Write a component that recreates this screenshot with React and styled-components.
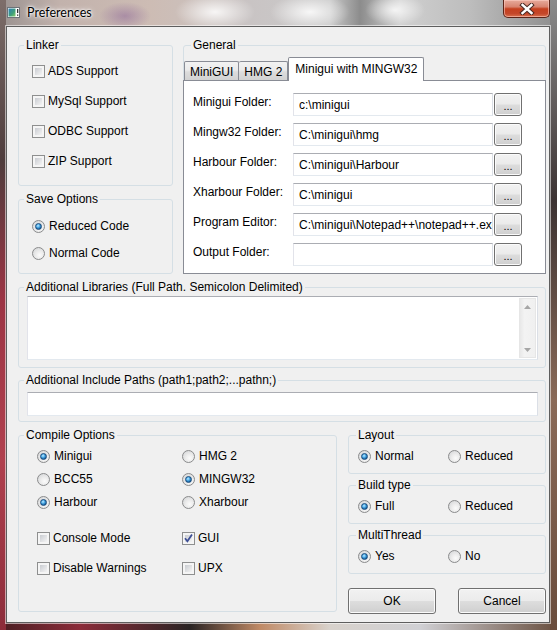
import React from 'react';
import styled, { createGlobalStyle } from 'styled-components';

const Global = createGlobalStyle`
  html, body { margin: 0; padding: 0; }
  body {
    width: 557px; height: 630px; overflow: hidden;
    font-family: "Liberation Sans", Arial, sans-serif; font-size: 12px; color: #000;
  }
`;

const Frame = styled.div`
  width: 557px; height: 630px; box-sizing: border-box;
  padding: 0 7px 7px 6px;
  display: flex; flex-direction: column;
  background:
    linear-gradient(180deg, #7d6e6a 0px, #4e3c3c 160px, #9c3444 300px, #b0404e 460px, #8c2c3a 630px) left top / 6px 100% no-repeat,
    linear-gradient(180deg, #8a8a8a 0px, #3c3232 200px, #8a6a58 400px, #6a4c3c 630px) right top / 7px 100% no-repeat,
    linear-gradient(90deg, #4a1e22 0px, #8c2c3a 80px, #2a2424 190px, #c08a66 260px, #d8d2cc 330px, #d0d0d4 420px, #6a5040 557px) left bottom / 100% 8px no-repeat,
    radial-gradient(ellipse 40px 18px at 215px 12px, rgba(255,255,255,0.85), transparent),
    radial-gradient(ellipse 40px 18px at 310px 12px, rgba(255,255,255,0.85), transparent),
    radial-gradient(ellipse 30px 16px at 395px 10px, rgba(255,255,255,0.8), transparent),
    radial-gradient(ellipse 26px 14px at 125px 16px, rgba(110,60,140,0.35), transparent),
    linear-gradient(90deg, #9a9290 0px, #c2b2ac 60px, #cdbcb4 150px, #c9c4c4 250px, #cacaca 330px, #8c8c8c 360px, #d0d0d0 400px, #bdbdbd 470px, #8e8e8e 557px);
`;

const TitleBar = styled.div`
  height: 26px; flex: none;
  display: flex; align-items: flex-start;
`;

const AppIcon = styled.svg`
  margin: 7px 0 0 1px; flex: none;
`;

const Title = styled.span`
  margin: 5px 0 0 7px;
  font-family: Lato, "Noto Sans", sans-serif; font-size: 12.5px; line-height: 15px;
  text-shadow: 0 0 6px #fff, 0 0 3px #fff, 0 0 2px #fff;
`;

const CloseButton = styled.div`
  margin-left: auto; flex: none;
  width: 47px; height: 18px; box-sizing: border-box;
  border: 1px solid #5c2418; border-top: none; border-radius: 0 0 5px 5px;
  background: linear-gradient(180deg, #e7ab9c 0%, #d88470 40%, #c5401f 52%, #c4472a 80%, #d9714e 100%);
  box-shadow: inset 0 0 0 1px rgba(255,210,200,0.55);
  display: flex; align-items: center; justify-content: center;
`;

const Client = styled.div`
  flex: 1; box-sizing: border-box;
  border: 1px solid #5e5e5e;
  box-shadow: 0 0 0 1px rgba(255,255,255,0.55);
  background: #f0f0f0;
  padding: 11px 2px 0 11px;
  display: flex; flex-direction: column;
`;

const Row = styled.div`
  display: flex; gap: ${p => p.$gap || 0}px;
  margin-top: ${p => p.$mt || 0}px;
  justify-content: ${p => p.$justify || 'flex-start'};
  height: ${p => (p.$h ? `${p.$h}px` : 'auto')};
`;

const Column = styled.div`
  display: flex; flex-direction: column;
  width: ${p => p.$w}px; gap: ${p => p.$gap || 0}px;
`;

const Group = styled.fieldset`
  box-sizing: border-box; margin: 0; padding: 0; min-width: 0;
  width: ${p => p.$w}px; height: ${p => p.$h}px; flex: none;
  border: 1px solid #d5dfe5; border-radius: 3px;
  display: flex; flex-direction: column;
`;

const Legend = styled.legend`
  margin-left: ${p => p.$offset ?? 5}px;
  padding: 0 2px;
  font-size: 12px; line-height: 14px;
`;

const OptionList = styled.div`
  display: flex; flex-direction: column;
  padding: ${p => p.$pad};
  gap: ${p => p.$gap}px;
`;

const OptionGrid = styled.div`
  display: grid;
  grid-template-columns: ${p => p.$col}px 1fr;
  grid-auto-rows: 16px;
  row-gap: ${p => p.$gap}px;
  padding: ${p => p.$pad};
`;

const Option = styled.label`
  display: flex; align-items: center; gap: ${p => p.$gap ?? 3}px;
  height: 16px; white-space: nowrap;
`;

const Box = styled.span`
  width: 13px; height: 13px; box-sizing: border-box; flex: none;
  border: 1px solid #8e8f8f;
  padding: 2px;
  background: linear-gradient(135deg, #c9ccd1 0%, #e3e4e6 60%, #f4f4f4 100%) content-box, #f5f5f5 padding-box;
  display: flex; align-items: center; justify-content: center;
`;

const Circle = styled.span`
  width: 13px; height: 13px; box-sizing: border-box; flex: none;
  border-radius: 50%;
  border: 1px solid #8a8b8c;
  background: radial-gradient(circle at 60% 65%, #fbfbfb 0%, #ececec 40%, #cfd1d3 100%);
  display: flex; align-items: center; justify-content: center;
`;

const Dot = styled.span`
  width: 7px; height: 7px; border-radius: 50%; box-sizing: border-box;
  border: 1px solid #1a4b7c;
  background: radial-gradient(circle at 40% 35%, #c6ecff 0%, #53b0ea 35%, #15609f 75%, #0b3f70 100%);
`;

const Checkbox = ({ checked, children }) => (
  <Option>
    <Box>
      {checked && (
        <svg width="11" height="11" viewBox="0 0 11 11" style={{ margin: -2 }}>
          <path d="M2 5.2 L4.4 8.2 L9 1.6" fill="none" stroke="#3d4f95" strokeWidth="1.8" />
        </svg>
      )}
    </Box>
    {children}
  </Option>
);

const Radio = ({ checked, children }) => (
  <Option $gap={4}>
    <Circle>{checked && <Dot />}</Circle>
    {children}
  </Option>
);

/* Tabs */
const TabStrip = styled.div`
  display: flex; align-items: flex-end;
  height: 23px; margin: 5px -1px 0 -1px; padding-left: 1px; flex: none;
`;

const Tab = styled.div`
  box-sizing: border-box;
  height: ${p => (p.$active ? 24 : 19)}px;
  margin-bottom: ${p => (p.$active ? -1 : 0)}px;
  padding: ${p => (p.$active ? '4px 6px 0 6px' : '3px 5px 0 5px')};
  border: 1px solid #898c95; border-bottom: none;
  border-left: ${p => (p.$first || p.$active ? '1px solid #898c95' : 'none')};
  border-radius: 2px 2px 0 0;
  background: ${p => (p.$active ? '#fff' : 'linear-gradient(180deg, #f2f2f2 0%, #ebebeb 45%, #dcdcdc 55%, #d2d2d2 100%)')};
  position: relative; z-index: ${p => (p.$active ? 1 : 0)};
  white-space: nowrap; line-height: 14px;
`;

const TabPanel = styled.div`
  flex: 1; background: #fff;
  border: 1px solid #898c95;
  margin: 0 -1px -1px -1px;
  padding: 12px 0 0 9px;
  display: flex; flex-direction: column; gap: 7px;
`;

const FormRow = styled.div`
  display: flex; align-items: flex-start; height: 23px;
`;

const FormLabel = styled.span`
  width: 100px; flex: none; padding-top: 2px; line-height: 14px;
`;

const TextInput = styled.input`
  box-sizing: border-box;
  width: ${p => p.$w}px; height: ${p => p.$h || 23}px; flex: none;
  margin: 0; padding: 0 0 0 5px;
  font: 12px "Liberation Sans", Arial, sans-serif; color: #000;
  border: 1px solid; border-color: #abadb3 #dbdfe6 #e3e9ef #e2e3ea;
  background: #fff; outline: none;
`;

const Button = styled.button`
  box-sizing: border-box; margin: 0; flex: none;
  width: ${p => p.$w}px; height: ${p => p.$h}px;
  margin-left: ${p => p.$ml || 0}px;
  border: 1px solid #707070; border-radius: 3px;
  background: linear-gradient(180deg, #f2f2f2 0%, #ebebeb 48%, #dddddd 52%, #cfcfcf 100%);
  box-shadow: inset 0 0 0 1px #fbfbfb;
  font: ${p => p.$fs || 12}px "Liberation Sans", Arial, sans-serif; color: #000;
  padding: ${p => p.$pad || '0'};
  display: flex; justify-content: center; align-items: ${p => p.$align || 'center'};
`;

const MemoBox = styled.div`
  box-sizing: border-box; height: 64px;
  border: 1px solid; border-color: #abadb3 #dbdfe6 #e3e9ef #e2e3ea;
  background: #fff; display: flex;
`;

const Memo = styled.textarea`
  flex: 1; border: none; outline: none; resize: none; margin: 0; padding: 2px 4px;
  font: 12px "Liberation Sans", Arial, sans-serif; background: transparent;
`;

const ScrollBar = styled.div`
  width: 17px; flex: none; box-sizing: border-box;
  margin: 1px 1px 1px 0;
  background: linear-gradient(90deg, #e8e8e8 0%, #f3f3f3 30%, #f0f0f0 100%);
  border: 1px solid #e6e6e6;
  display: flex; flex-direction: column; justify-content: space-between; align-items: center;
  padding: 6px 0 5px 0;
`;

const GroupBody = styled.div`
  padding: ${p => p.$pad};
  display: flex; flex-direction: column;
`;

const Dots = styled.span`
  line-height: 8px;
`;

const fields = [
  ['Minigui Folder:', 'c:\\minigui'],
  ['Mingw32 Folder:', 'C:\\minigui\\hmg'],
  ['Harbour Folder:', 'C:\\minigui\\Harbour'],
  ['Xharbour Folder:', 'C:\\minigui'],
  ['Program Editor:', 'C:\\minigui\\Notepad++\\notepad++.exe'],
  ['Output Folder:', ''],
];

export default function App() {
  return (
    <>
      <Global />
      <Frame>
        <TitleBar>
          <AppIcon width="13" height="11" viewBox="0 0 13 11">
            <rect x="0.5" y="0.5" width="12" height="10" fill="#fff" stroke="#6d7378" />
            <defs>
              <linearGradient id="ig" x1="0" y1="0" x2="1" y2="1">
                <stop offset="0" stopColor="#2f7fb8" />
                <stop offset="0.6" stopColor="#3fa07a" />
                <stop offset="1" stopColor="#8ccf6a" />
              </linearGradient>
            </defs>
            <rect x="1.5" y="1.5" width="7" height="8" fill="url(#ig)" />
            <rect x="10" y="2" width="1.3" height="4" fill="#333" />
            <rect x="10" y="7.5" width="1.3" height="1.3" fill="#333" />
          </AppIcon>
          <Title>Preferences</Title>
          <CloseButton>
            <svg width="16" height="12" viewBox="0 0 16 12">
              <path d="M3.5 2 L12.5 10 M12.5 2 L3.5 10" stroke="#4a2a24" strokeWidth="4.4" strokeLinecap="square" />
              <path d="M3.5 2 L12.5 10 M12.5 2 L3.5 10" stroke="#fff" strokeWidth="2.4" strokeLinecap="square" />
            </svg>
          </CloseButton>
        </TitleBar>

        <Client>
          <Row $gap={10} $h={236}>
            <Column $w={155} $gap={6}>
              <Group $w={155} $h={148}>
                <Legend>Linker</Legend>
                <OptionList $pad="11px 0 0 13px" $gap={14}>
                  <Checkbox>ADS Support</Checkbox>
                  <Checkbox>MySql Support</Checkbox>
                  <Checkbox>ODBC Support</Checkbox>
                  <Checkbox>ZIP Support</Checkbox>
                </OptionList>
              </Group>
              <Group $w={155} $h={82}>
                <Legend>Save Options</Legend>
                <OptionList $pad="12px 0 0 13px" $gap={11}>
                  <Radio checked>Reduced Code</Radio>
                  <Radio>Normal Code</Radio>
                </OptionList>
              </Group>
            </Column>

            <Group $w={363} $h={236}>
              <Legend $offset={7}>General</Legend>
              <TabStrip>
                <Tab $first>MiniGUI</Tab>
                <Tab>HMG 2</Tab>
                <Tab $active>Minigui with MINGW32</Tab>
              </TabStrip>
              <TabPanel>
                {fields.map(([label, value]) => (
                  <FormRow key={label}>
                    <FormLabel>{label}</FormLabel>
                    <TextInput $w={200} readOnly value={value} />
                    <Button $w={28} $h={23} $ml={1} $fs={11} $align="flex-end" $pad="0 0 5px 0">
                      <Dots>...</Dots>
                    </Button>
                  </FormRow>
                ))}
              </TabPanel>
            </Group>
          </Row>

          <Row $mt={6}>
            <Group $w={528} $h={88}>
              <Legend>Additional Libraries (Full Path. Semicolon Delimited)</Legend>
              <GroupBody $pad="2px 7px 0 8px">
                <MemoBox>
                  <Memo readOnly value="" />
                  <ScrollBar>
                    <svg width="7" height="4" viewBox="0 0 7 4"><path d="M0 4 L3.5 0 L7 4 Z" fill="#a6a6a6" /></svg>
                    <svg width="7" height="4" viewBox="0 0 7 4"><path d="M0 0 L3.5 4 L7 0 Z" fill="#a6a6a6" /></svg>
                  </ScrollBar>
                </MemoBox>
              </GroupBody>
            </Group>
          </Row>

          <Row $mt={5}>
            <Group $w={528} $h={49}>
              <Legend>Additional Include Paths (path1;path2;...pathn;)</Legend>
              <GroupBody $pad="5px 7px 0 8px">
                <TextInput $w={511} $h={24} readOnly value="" />
              </GroupBody>
            </Group>
          </Row>

          <Row $mt={6} $gap={11}>
            <Group $w={319} $h={184}>
              <Legend>Compile Options</Legend>
              <OptionGrid $col={145} $gap={7} $pad="6px 0 0 18px">
                <Radio checked>Minigui</Radio>
                <Radio>HMG 2</Radio>
                <Radio>BCC55</Radio>
                <Radio checked>MINGW32</Radio>
                <Radio checked>Harbour</Radio>
                <Radio>Xharbour</Radio>
              </OptionGrid>
              <OptionGrid $col={145} $gap={14} $pad="20px 0 0 18px">
                <Checkbox>Console Mode</Checkbox>
                <Checkbox checked>GUI</Checkbox>
                <Checkbox>Disable Warnings</Checkbox>
                <Checkbox>UPX</Checkbox>
              </OptionGrid>
            </Group>

            <Column $w={198} $gap={4}>
              <Group $w={198} $h={46}>
                <Legend $offset={7}>Layout</Legend>
                <OptionGrid $col={90} $gap={0} $pad="6px 0 0 9px">
                  <Radio checked>Normal</Radio>
                  <Radio>Reduced</Radio>
                </OptionGrid>
              </Group>
              <Group $w={198} $h={46}>
                <Legend $offset={7}>Build type</Legend>
                <OptionGrid $col={90} $gap={0} $pad="6px 0 0 9px">
                  <Radio checked>Full</Radio>
                  <Radio>Reduced</Radio>
                </OptionGrid>
              </Group>
              <Group $w={198} $h={46}>
                <Legend $offset={7}>MultiThread</Legend>
                <OptionGrid $col={90} $gap={0} $pad="6px 0 0 9px">
                  <Radio checked>Yes</Radio>
                  <Radio>No</Radio>
                </OptionGrid>
              </Group>
              <Row $mt={10} $justify="space-between">
                <Button $w={88} $h={26}>OK</Button>
                <Button $w={88} $h={26}>Cancel</Button>
              </Row>
            </Column>
          </Row>
        </Client>
      </Frame>
    </>
  );
}
